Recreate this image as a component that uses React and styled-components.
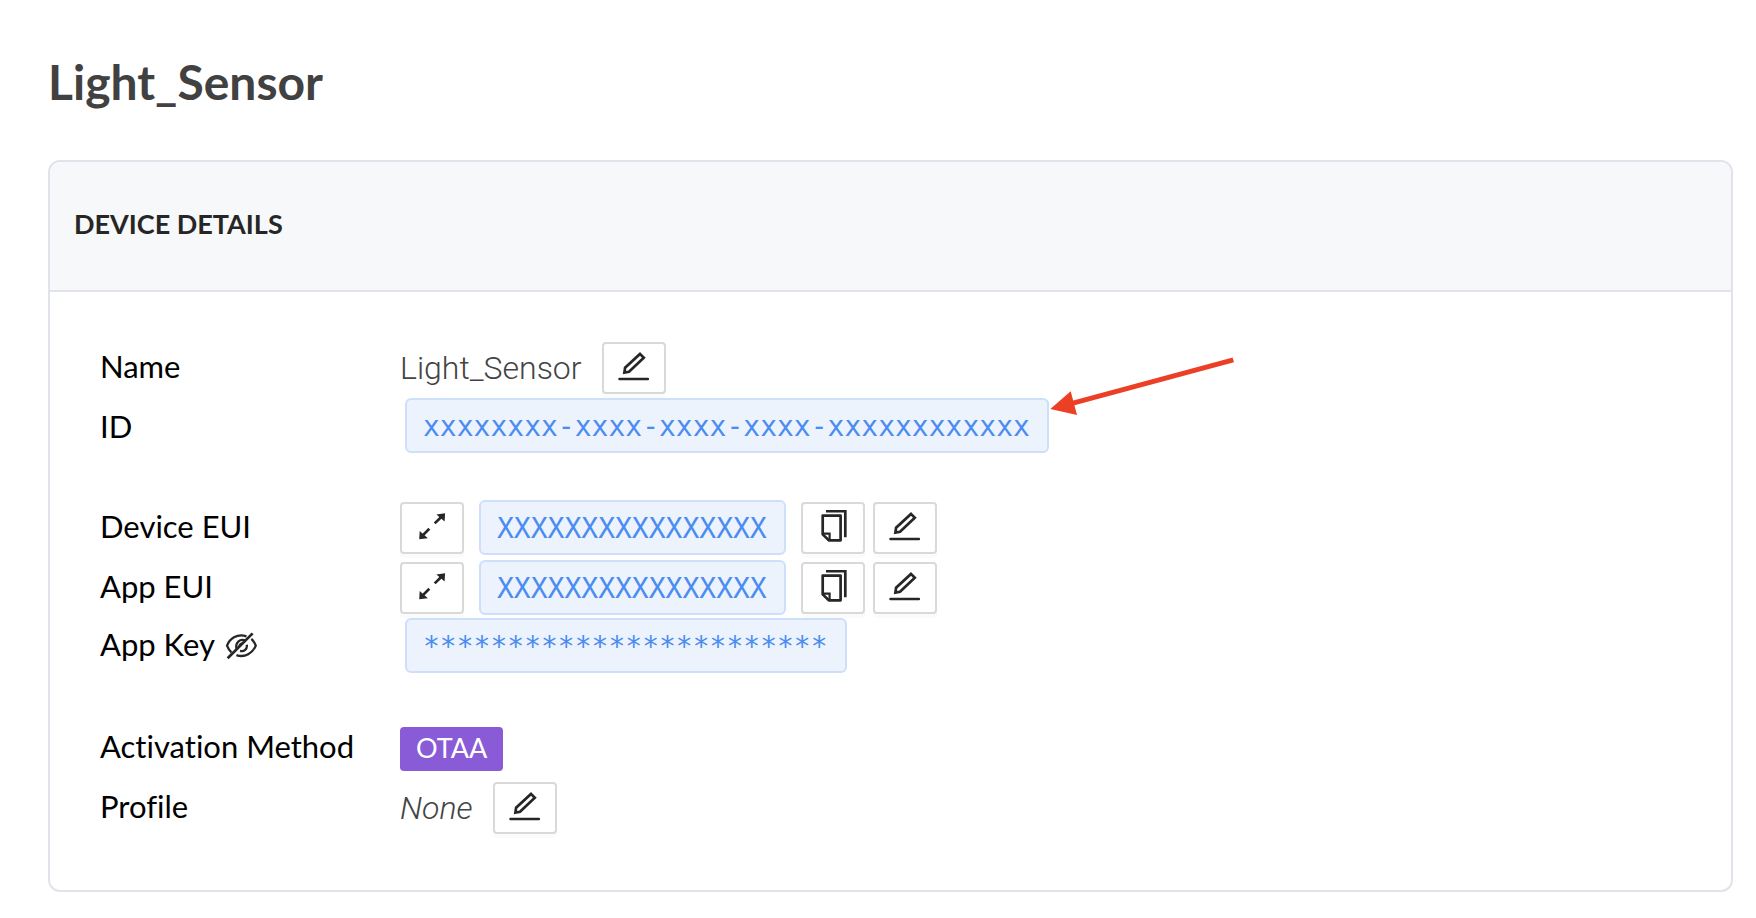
import React from "react";
import styled, { createGlobalStyle } from "styled-components";

const display = `"Lato", "Liberation Sans", sans-serif`;
const text = `"Roboto", "Liberation Sans", sans-serif`;
const mono = `"DejaVu Sans Mono", "Liberation Mono", monospace`;

const GlobalStyle = createGlobalStyle`
  *, *::before, *::after { box-sizing: border-box; }
  body {
    margin: 0;
    background: #fff;
    color: #000;
    font-family: ${display};
    font-variant-ligatures: none;
  }
`;

const Page = styled.main`
  padding: 52px 23px 24px 48px;
`;

const Title = styled.h1`
  margin: 0 0 48px;
  color: #414141;
  font-size: 48px;
  font-weight: 700;
  line-height: 60px;
`;

const Card = styled.section`
  border: 2px solid #e0e3e9;
  border-radius: 12px;
  background: #fff;
`;

const CardHeader = styled.header`
  display: flex;
  align-items: center;
  height: 130px;
  padding: 0 24px 4px;
  border-bottom: 2px solid #e0e3e9;
  border-radius: 10px 10px 0 0;
  background: #f7f8fa;
`;

const CardTitle = styled.h2`
  margin: 0;
  color: #262626;
  font-size: 27px;
  font-weight: 700;
  line-height: 36px;
`;

const CardBody = styled.div`
  display: flex;
  flex-direction: column;
  gap: 40px;
  padding: 46px 50px 52px;
`;

const Group = styled.dl`
  margin: 0;
`;

const Row = styled.div`
  display: grid;
  grid-template-columns: 300px 1fr;
  align-items: center;
  height: 60px;
`;

const Label = styled.dt`
  display: flex;
  align-items: center;
  gap: 10px;
  font-size: 31px;
  font-weight: 400;
  line-height: 40px;
  padding-bottom: ${(p) => (p.$raised ? "8px" : "4px")};
`;

const Value = styled.dd`
  display: flex;
  align-items: center;
  gap: 8px;
  height: 60px;
  margin: 0;
`;

const PlainValue = styled.span`
  margin-right: 12px;
  color: #444;
  font-family: ${text};
  font-size: 32px;
  font-weight: 300;
  line-height: 40px;
  font-style: ${(p) => (p.$empty ? "italic" : "normal")};
`;

const Code = styled.code`
  position: relative;
  flex: none;
  align-self: ${(p) => (p.$standalone ? "flex-start" : "center")};
  height: 55px;
  margin: ${(p) => (p.$standalone ? "0 5px" : "0 7px 2px")};
  padding: 0 17px 0 16px;
  border: 2px solid #cddffb;
  border-radius: 6px;
  background: #ecf3fd;
  color: #4a8cf1;
  font-family: ${mono};
  font-size: 28px;
  line-height: 54px;
  white-space: nowrap;
`;

const Badge = styled.span`
  height: 44px;
  margin-top: 2px;
  padding: 0 16px;
  border-radius: 4px;
  background: #8a5bd7;
  color: #fff;
  font-size: 27px;
  font-weight: 400;
  line-height: 42px;
`;

const IconButton = styled.button`
  display: flex;
  flex: none;
  align-items: center;
  justify-content: center;
  width: 64px;
  height: 52px;
  padding: 0;
  border: 2px solid #d9d9d9;
  border-radius: 4px;
  background: #fff;
  box-shadow: 0 4px 0 rgba(0, 0, 0, 0.016);
  color: #262626;
  cursor: pointer;
`;

const RevealButton = styled.button`
  display: flex;
  padding: 4px 0 0;
  border: 0;
  background: none;
  color: #262626;
  cursor: pointer;
`;

const Glyph = styled.svg`
  flex: none;
  fill: none;
  stroke: currentColor;
  stroke-width: 2.7;
`;

const Pointer = styled.svg`
  position: absolute;
  top: -43px;
  left: 100%;
  margin-left: 2px;
  overflow: visible;
  pointer-events: none;
`;

const EditIcon = () => (
  <Glyph width="36" height="36" viewBox="-2 -2 36 36" aria-hidden="true">
    <path d="M22 1.9 25.8 5.7 11 19.7 6.4 20.6 7.1 15.7Z" />
    <path d="M1.6 27H29.8" strokeLinecap="round" />
  </Glyph>
);

const ExpandIcon = () => (
  <Glyph width="36" height="36" viewBox="-2 -2 36 36" aria-hidden="true">
    <path d="M18.7 11.4 25.5 4.8M13.3 16.8 6.5 23.6" />
    <path
      d="M20.4 2.4 29.1 1.2 28.6 9.5ZM11.9 26.2 3.2 27.2 3.7 18.9Z"
      fill="currentColor"
      stroke="none"
    />
  </Glyph>
);

const CopyIcon = () => (
  <Glyph width="36" height="36" viewBox="-2 -2 36 36" aria-hidden="true">
    <path d="M9-.8H28.3V25.3" />
    <path d="M5.7 3.6H23.6V28.3H11.8L5.7 22.4Z" strokeLinejoin="round" />
    <path d="M6 21.7H12.6V28" strokeWidth="2.2" />
  </Glyph>
);

const HiddenIcon = () => (
  <Glyph width="32" height="28" viewBox="0 0 32 28" aria-hidden="true">
    <path
      strokeWidth="2.3"
      d="M21.5 4.4C12.5 1 4.8 6.6 2 13.6C3 16.2 4.5 18.5 6.4 20.3M26.4 6.8C28.3 8.6 29.8 11 30.8 13.6C27.8 20.8 20 26.2 11.4 23.1M20.4 8.7C15 6.2 9.7 11 11.7 16.8M21.8 12.8C22.5 17.2 19 20 15 18.9M14.6 14.6C14.3 12.7 15.8 11.4 17.6 11.7"
    />
    <path d="M2.6 26.2 27.6 1.4" />
  </Glyph>
);

const PointerArrow = () => (
  <Pointer width="186" height="60" viewBox="0 0 186 60" aria-hidden="true">
    <path d="M24 46.2 184.3 2.9" stroke="#eb4025" strokeWidth="5" />
    <path d="M1.3 52 21.7 34.2 28 58Z" fill="#eb4025" />
  </Pointer>
);

const EditButton = ({ field }) => (
  <IconButton type="button" aria-label={`Edit ${field}`}>
    <EditIcon />
  </IconButton>
);

const EuiRow = ({ label, value }) => (
  <Row>
    <Label>{label}</Label>
    <Value>
      <IconButton type="button" aria-label={`Expand ${label}`}>
        <ExpandIcon />
      </IconButton>
      <Code>{value}</Code>
      <IconButton type="button" aria-label={`Copy ${label}`}>
        <CopyIcon />
      </IconButton>
      <EditButton field={label} />
    </Value>
  </Row>
);

export default function App() {
  return (
    <>
      <GlobalStyle />
      <Page>
        <Title>Light_Sensor</Title>
        <Card>
          <CardHeader>
            <CardTitle>DEVICE DETAILS</CardTitle>
          </CardHeader>
          <CardBody>
            <Group>
              <Row>
                <Label>Name</Label>
                <Value>
                  <PlainValue>Light_Sensor</PlainValue>
                  <EditButton field="Name" />
                </Value>
              </Row>
              <Row>
                <Label>ID</Label>
                <Value>
                  <Code $standalone>
                    xxxxxxxx-xxxx-xxxx-xxxx-xxxxxxxxxxxx
                    <PointerArrow />
                  </Code>
                </Value>
              </Row>
            </Group>
            <Group>
              <EuiRow label="Device EUI" value="XXXXXXXXXXXXXXXX" />
              <EuiRow label="App EUI" value="XXXXXXXXXXXXXXXX" />
              <Row>
                <Label $raised>
                  App Key
                  <RevealButton type="button" aria-label="Show App Key">
                    <HiddenIcon />
                  </RevealButton>
                </Label>
                <Value>
                  <Code $standalone>************************</Code>
                </Value>
              </Row>
            </Group>
            <Group>
              <Row>
                <Label>Activation Method</Label>
                <Value>
                  <Badge>OTAA</Badge>
                </Value>
              </Row>
              <Row>
                <Label>Profile</Label>
                <Value>
                  <PlainValue $empty>None</PlainValue>
                  <EditButton field="Profile" />
                </Value>
              </Row>
            </Group>
          </CardBody>
        </Card>
      </Page>
    </>
  );
}
